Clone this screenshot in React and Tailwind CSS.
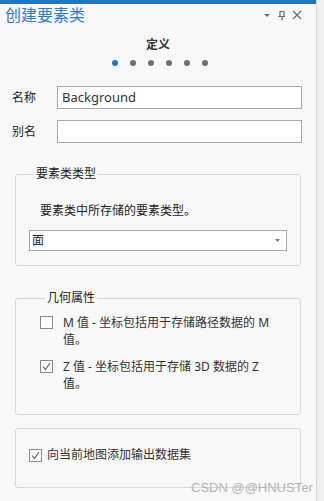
import React from "react";

const font = "font-['Noto_Sans','Noto_Sans_CJK_SC',sans-serif]";

function Check({ checked }) {
  return (
    <div className="w-[13px] h-[13px] border border-[#8a8a8a] bg-white flex items-center justify-center shrink-0">
      {checked && (
        <svg width="11" height="11" viewBox="0 0 11 11">
          <path d="M2 5.5 L4.5 8.5 L9 2" fill="none" stroke="#606060" strokeWidth="1.1" />
        </svg>
      )}
    </div>
  );
}

export default function App() {
  return (
    <div className={`w-[324px] h-[501px] bg-[#f8f8f8] flex relative overflow-hidden text-[12px] text-[#222] ${font}`}>
      <div className="w-[316px] flex flex-col">
        <div className="h-1 bg-[#1d77c3]" />
        <div className="h-[22px] flex items-center justify-between pl-[5px] pr-[14px]">
          <span className="text-[16px] leading-[22px] text-[#2f7dc2]">创建要素类</span>
          <div className="flex items-center gap-[6px]">
            <svg width="8" height="10" viewBox="0 0 8 10">
              <path d="M1 4 L7 4 L4 7 Z" fill="#6a6a6a" />
            </svg>
            <svg width="9" height="11" viewBox="0 0 9 11">
              <path d="M3 1.5 H7 V6 M3 1 V6 M1 6.5 H8 M5 6.5 V10.5" fill="none" stroke="#6a6a6a" strokeWidth="1.2" />
            </svg>
            <svg width="10" height="10" viewBox="0 0 10 10">
              <path d="M1 1 L9 9 M9 1 L1 9" fill="none" stroke="#6a6a6a" strokeWidth="1.2" />
            </svg>
          </div>
        </div>
        <div className="mt-[11px] text-center font-bold text-[12px] leading-[16px] text-[#333]">定义</div>
        <div className="mt-[7px] flex justify-center gap-[12px] pl-[4px]">
          <div className="w-[6px] h-[6px] rounded-full bg-[#1d77c3]" />
          <div className="w-[6px] h-[6px] rounded-full bg-[#6e6e6e]" />
          <div className="w-[6px] h-[6px] rounded-full bg-[#6e6e6e]" />
          <div className="w-[6px] h-[6px] rounded-full bg-[#6e6e6e]" />
          <div className="w-[6px] h-[6px] rounded-full bg-[#6e6e6e]" />
          <div className="w-[6px] h-[6px] rounded-full bg-[#6e6e6e]" />
        </div>
        <div className="mt-[20px] flex items-center pl-[12px] pr-[14px]">
          <span className="w-[45px] text-[12px]">名称</span>
          <div className="flex-1 h-[23px] border border-[#a8a8a8] bg-white flex items-center pl-[4px] text-[13px] text-[#333]">Background</div>
        </div>
        <div className="mt-[11px] flex items-center pl-[12px] pr-[14px]">
          <span className="w-[45px] text-[12px]">别名</span>
          <div className="flex-1 h-[23px] border border-[#a8a8a8] bg-white" />
        </div>

        <fieldset className="mt-[23px] mx-[15px] border border-[#d8d8d8] rounded-[3px] px-[13px] pb-[14px]">
          <legend className="ml-[5px] px-[2px] text-[12px] leading-[16px]">要素类类型</legend>
          <div className="mt-[21px] ml-[11px] leading-[16px]">要素类中所存储的要素类型。</div>
          <div className="mt-[11px] h-[21px] border border-[#a8a8a8] bg-white flex items-center justify-between pl-[2px] pr-[6px]">
            <span>面</span>
            <svg width="5" height="4" viewBox="0 0 5 4">
              <path d="M0 0 L5 0 L2.5 3 Z" fill="#777" />
            </svg>
          </div>
        </fieldset>

        <fieldset className="mt-[24px] mx-[15px] border border-[#d8d8d8] rounded-[3px] pl-[24px] pr-[13px] pb-[22px]">
          <legend className="ml-[5px] px-[2px] text-[12px] leading-[16px]">几何属性</legend>
          <div className="mt-[8px] flex items-start gap-[10px]">
            <div className="mt-[2px]"><Check checked={false} /></div>
            <div className="leading-[17px] text-[#333]">M 值 - 坐标包括用于存储路径数据的 M<br />值。</div>
          </div>
          <div className="mt-[10px] flex items-start gap-[10px]">
            <div className="mt-[2px]"><Check checked={true} /></div>
            <div className="leading-[17px] text-[#333]">Z 值 - 坐标包括用于存储 3D 数据的 Z<br />值。</div>
          </div>
        </fieldset>

        <div className="mt-[13px] mx-[15px] border border-[#d8d8d8] rounded-[3px] pl-[13px] pt-[18px] pb-[24px] flex items-center gap-[5px]">
          <Check checked={true} />
          <span className="leading-[16px] text-[#333]">向当前地图添加输出数据集</span>
        </div>
      </div>
      <div className="w-[8px] border-l border-[#d4d4d4] bg-[#f0f0f0]" />
      <div className="absolute left-[191px] top-[479px] text-[13px] leading-[18px] text-[#b4b4b4] font-['Liberation_Sans',sans-serif]">CSDN @@HNUSTer</div>
    </div>
  );
}
